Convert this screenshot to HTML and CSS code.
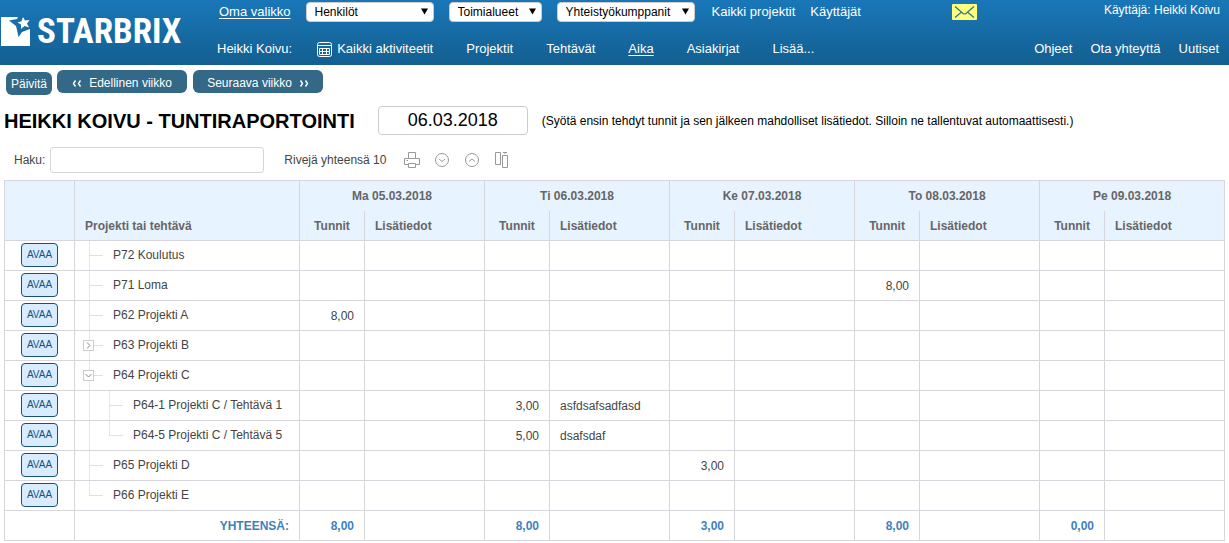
FILE: index.html
```html
<!DOCTYPE html>
<html lang="fi">
<head>
<meta charset="utf-8">
<meta name="viewport" content="width=device-width, initial-scale=1">
<title>Starbrix - Tuntiraportointi</title>
<link rel="stylesheet" href="styles.css">
</head>
<body>
<header class="top">
  <a class="logo" href="#" aria-label="Starbrix">
    <svg class="logo-mark" viewBox="0 0 29 29" aria-hidden="true">
      <path fill="#fff" d="M0 0H17L16 2L8 3.500L15 9L16 13L17.500 20L21 15L29 12V29H0Z"/>
      <path fill="#fff" d="M22 0L24 3.500L28.500 3L26 6.500L28 10.500L23.500 9L20 12L20 7.500L16.500 5.500L20.500 4.200Z"/>
    </svg>
    <span class="logo-text">STARBRIX</span>
  </a>
  <nav class="menus" aria-label="Päävalikko">
    <div class="menu-row menu-row-main">
      <a class="current own" href="#">Oma valikko</a>
      <span class="pick pick-people"><select aria-label="Henkilöt"><option>Henkilöt</option></select><svg viewBox="0 0 7 7" aria-hidden="true"><path d="M0 0.500H7L3.500 6.500Z"/></svg></span>
      <span class="pick pick-area"><select aria-label="Toimialueet"><option>Toimialueet</option></select><svg viewBox="0 0 7 7" aria-hidden="true"><path d="M0 0.500H7L3.500 6.500Z"/></svg></span>
      <span class="pick pick-partner"><select aria-label="Yhteistyökumppanit"><option>Yhteistyökumppanit</option></select><svg viewBox="0 0 7 7" aria-hidden="true"><path d="M0 0.500H7L3.500 6.500Z"/></svg></span>
      <a href="#">Kaikki projektit</a>
      <a href="#">Käyttäjät</a>
      <a class="mail" href="#" aria-label="Viestit"><svg viewBox="0 0 25 16" aria-hidden="true"><rect width="25" height="16" rx="1" fill="#ffff7d"/><path d="M3 2.500L11 9.500Q12.500 10.500 14 9.500L22 2.500M3 13.500L9 8.500M22 13.500L16 8.500" fill="none" stroke="#2d7587" stroke-width="1.200"/></svg></a>
    </div>
    <div class="menu-row menu-row-user">
      <span class="person">Heikki Koivu:</span>
      <a class="activities" href="#"><svg viewBox="0 0 15 15" aria-hidden="true"><path d="M2.500 .5H12.500Q14.500 .5 14.500 2.500V12.500Q14.500 14.500 12.500 14.500H2.500Q.5 14.500 .5 12.500V2.500Q.5 .5 2.500 .5ZM.5 3.500H14.500M2.500 6.500H12.500V12.500H2.500ZM2.500 9.500H12.500M5.500 6V13M9.500 6V13" fill="none" stroke="#fff"/></svg>Kaikki aktiviteetit</a>
      <a href="#">Projektit</a>
      <a href="#">Tehtävät</a>
      <a class="current" href="#">Aika</a>
      <a href="#">Asiakirjat</a>
      <a href="#">Lisää...</a>
    </div>
  </nav>
  <div class="account">
    <span class="account-name">Käyttäjä: Heikki Koivu</span>
    <nav class="account-links" aria-label="Tuki">
      <a href="#">Ohjeet</a>
      <a href="#">Ota yhteyttä</a>
      <a href="#">Uutiset</a>
    </nav>
  </div>
</header>

<main class="page">
  <div class="week-bar">
    <button class="refresh" type="button">Päivitä</button>
    <button class="week" type="button"><svg viewBox="0 0 10 7" aria-hidden="true"><path d="M3.500 .5L1.500 3.500L3.500 6.500M8.500 .5L6.500 3.500L8.500 6.500"/></svg>Edellinen viikko</button>
    <button class="week" type="button">Seuraava viikko<svg viewBox="0 0 10 7" aria-hidden="true"><path d="M1.500 .5L3.500 3.500L1.500 6.500M6.500 .5L8.500 3.500L6.500 6.500"/></svg></button>
  </div>

  <div class="title-bar">
    <h1>HEIKKI KOIVU - TUNTIRAPORTOINTI</h1>
    <input class="date" type="text" value="06.03.2018" aria-label="Päivämäärä">
    <p class="hint">(Syötä ensin tehdyt tunnit ja sen jälkeen mahdolliset lisätiedot. Silloin ne tallentuvat automaattisesti.)</p>
  </div>

  <div class="tools">
    <label for="search">Haku:</label>
    <input class="search" id="search" type="text">
    <span class="count">Rivejä yhteensä 10</span>
    <div class="tool-icons">
      <button type="button" aria-label="Tulosta"><svg viewBox="0 0 16 16"><path d="M4.500 6.500V.5H11.500V6.500M4.500 12.500H.5V6.500H15.500V12.500H11.500M4.500 11.500H11.500V15.500H4.500ZM2.500 8.500H4"/></svg></button>
      <button type="button" aria-label="Avaa kaikki"><svg viewBox="0 0 16 16"><circle cx="8" cy="8" r="6.500"/><path d="M5 7L8 9.500L11 7"/></svg></button>
      <button type="button" aria-label="Sulje kaikki"><svg viewBox="0 0 16 16"><circle cx="8" cy="8" r="6.500"/><path d="M5 9.500L8 7L11 9.500"/></svg></button>
      <button type="button" aria-label="Sarakkeet"><svg viewBox="0 0 16 16"><path d="M1.500 .5H6.500V12.500H1.500ZM8.500 3.500H13.500V15.500H8.500ZM9 .5H13M11 .5V2"/></svg></button>
    </div>
  </div>

  <table class="hours">
    <colgroup>
      <col class="c-open"><col class="c-name">
      <col class="c-num"><col class="c-note">
      <col class="c-num"><col class="c-note">
      <col class="c-num"><col class="c-note">
      <col class="c-num"><col class="c-note">
      <col class="c-num"><col class="c-note">
    </colgroup>
    <thead>
      <tr>
        <th rowspan="2"></th>
        <th class="name-head" rowspan="2" scope="col">Projekti tai tehtävä</th>
        <th class="day" colspan="2" scope="colgroup">Ma 05.03.2018</th>
        <th class="day" colspan="2" scope="colgroup">Ti 06.03.2018</th>
        <th class="day" colspan="2" scope="colgroup">Ke 07.03.2018</th>
        <th class="day" colspan="2" scope="colgroup">To 08.03.2018</th>
        <th class="day" colspan="2" scope="colgroup">Pe 09.03.2018</th>
      </tr>
      <tr>
        <th class="sub" scope="col">Tunnit</th><th class="sub note" scope="col">Lisätiedot</th>
        <th class="sub" scope="col">Tunnit</th><th class="sub note" scope="col">Lisätiedot</th>
        <th class="sub" scope="col">Tunnit</th><th class="sub note" scope="col">Lisätiedot</th>
        <th class="sub" scope="col">Tunnit</th><th class="sub note" scope="col">Lisätiedot</th>
        <th class="sub" scope="col">Tunnit</th><th class="sub note" scope="col">Lisätiedot</th>
      </tr>
    </thead>
    <tbody>
      <tr><td class="open"><button type="button">AVAA</button></td><td><div class="tree"><i class="branch"></i>P72 Koulutus</div></td><td class="num"></td><td></td><td class="num"></td><td></td><td class="num"></td><td></td><td class="num"></td><td></td><td class="num"></td><td></td></tr>
      <tr><td class="open"><button type="button">AVAA</button></td><td><div class="tree"><i class="branch"></i>P71 Loma</div></td><td class="num"></td><td></td><td class="num"></td><td></td><td class="num"></td><td></td><td class="num">8,00</td><td></td><td class="num"></td><td></td></tr>
      <tr><td class="open"><button type="button">AVAA</button></td><td><div class="tree"><i class="branch"></i>P62 Projekti A</div></td><td class="num">8,00</td><td></td><td class="num"></td><td></td><td class="num"></td><td></td><td class="num"></td><td></td><td class="num"></td><td></td></tr>
      <tr><td class="open"><button type="button">AVAA</button></td><td><div class="tree"><i class="branch"></i><button class="toggle" type="button" aria-label="Avaa P63" aria-expanded="false"><svg viewBox="0 0 9 9"><path d="M3 1.500L6 4.500L3 7.500"/></svg></button>P63 Projekti B</div></td><td class="num"></td><td></td><td class="num"></td><td></td><td class="num"></td><td></td><td class="num"></td><td></td><td class="num"></td><td></td></tr>
      <tr><td class="open"><button type="button">AVAA</button></td><td><div class="tree"><i class="branch"></i><button class="toggle" type="button" aria-label="Sulje P64" aria-expanded="true"><svg viewBox="0 0 9 9"><path d="M1.500 3L4.500 6L7.500 3"/></svg></button>P64 Projekti C</div></td><td class="num"></td><td></td><td class="num"></td><td></td><td class="num"></td><td></td><td class="num"></td><td></td><td class="num"></td><td></td></tr>
      <tr><td class="open"><button type="button">AVAA</button></td><td><div class="tree"><i class="rail"></i><i class="branch"></i>P64-1 Projekti C / Tehtävä 1</div></td><td class="num"></td><td></td><td class="num">3,00</td><td class="note">asfdsafsadfasd</td><td class="num"></td><td></td><td class="num"></td><td></td><td class="num"></td><td></td></tr>
      <tr><td class="open"><button type="button">AVAA</button></td><td><div class="tree"><i class="rail"></i><i class="branch last"></i>P64-5 Projekti C / Tehtävä 5</div></td><td class="num"></td><td></td><td class="num">5,00</td><td class="note">dsafsdaf</td><td class="num"></td><td></td><td class="num"></td><td></td><td class="num"></td><td></td></tr>
      <tr><td class="open"><button type="button">AVAA</button></td><td><div class="tree"><i class="branch"></i>P65 Projekti D</div></td><td class="num"></td><td></td><td class="num"></td><td></td><td class="num">3,00</td><td></td><td class="num"></td><td></td><td class="num"></td><td></td></tr>
      <tr><td class="open"><button type="button">AVAA</button></td><td><div class="tree"><i class="branch last"></i>P66 Projekti E</div></td><td class="num"></td><td></td><td class="num"></td><td></td><td class="num"></td><td></td><td class="num"></td><td></td><td class="num"></td><td></td></tr>
    </tbody>
    <tfoot>
      <tr><td></td><th class="total" scope="row">YHTEENSÄ:</th><td class="num">8,00</td><td></td><td class="num">8,00</td><td></td><td class="num">3,00</td><td></td><td class="num">8,00</td><td></td><td class="num">0,00</td><td></td></tr>
    </tfoot>
  </table>
</main>
</body>
</html>
```
FILE: styles.css
```css
* { box-sizing: border-box; }

body {
  margin: 0;
  background: #fff;
  color: #000;
  font: 12px/16px "Liberation Sans", Arial, sans-serif;
}

button, input, select { font: inherit; color: inherit; margin: 0; }
button { cursor: pointer; }
svg { display: block; }

/* Header */
.top {
  display: flex;
  min-height: 65px;
  padding-right: 9px;
  background: linear-gradient(#1977b8, #135f90);
  color: #fff;
  font-size: 13px;
  white-space: nowrap;
}
.top a { color: #fff; text-decoration: none; }
.top a.current { text-decoration: underline; text-underline-offset: 2px; }

.logo {
  display: flex;
  flex: 0 0 217px;
  align-items: flex-start;
  gap: 7px;
  padding: 17px 0 0 1px;
}
.logo-mark { width: 29px; height: 29px; }
.logo-text {
  font: bold 35px/30px "Liberation Sans Narrow", "Roboto Condensed", sans-serif;
}

.menus { flex: 1; }
.menu-row { display: flex; align-items: center; }
.menu-row-main { gap: 15px; height: 24px; }
.menu-row-main .own { padding-left: 2px; }
.menu-row-user { gap: 33px; height: 41px; padding-top: 9px; }
.menu-row-user .person { margin-right: -8px; }
.activities { display: flex; align-items: center; gap: 5px; }
.activities svg { width: 15px; height: 15px; }
.mail { margin-left: 76px; }
.mail svg { width: 25px; height: 16px; }

.pick { position: relative; color: #000; font-size: 12px; }
.pick select {
  display: block;
  width: 100%;
  height: 20px;
  padding: 0 8px;
  border: 1px solid #ccc;
  border-radius: 4px;
  background: #fff;
  appearance: none;
}
.pick svg {
  position: absolute;
  top: 6px;
  right: 6px;
  width: 7px;
  height: 7px;
  pointer-events: none;
}
.pick-people { width: 128px; }
.pick-area { width: 93px; }
.pick-partner { width: 138px; margin-right: 2px; }

.account { display: flex; flex-direction: column; align-items: flex-end; gap: 23px; padding-top: 2px; }
.account-name { font-size: 12px; }
.account-links { display: flex; gap: 18px; padding-right: 1px; }

/* Week navigation */
.page { padding: 5px 4px 0; }
.week-bar { display: flex; align-items: flex-start; padding-left: 2px; }
.week-bar button {
  height: 23px;
  border: 0;
  border-radius: 6px;
  background: #336886;
  color: #fff;
}
.week-bar .refresh { margin: 2px 5px 0 0; padding: 0 5px; }
.week-bar .week {
  display: flex;
  align-items: center;
  justify-content: center;
  gap: 7px;
  width: 130px;
  margin-right: 6px;
  padding: 3px 0 0;
}
.week-bar svg { width: 10px; height: 7px; fill: none; stroke: #fff; stroke-width: 1.4; }

/* Title */
.title-bar { display: flex; align-items: center; margin-top: 10px; }
h1 { margin: 0 23px 0 0; padding-top: 2px; font-size: 20px; line-height: 28px; }
.date {
  width: 150px;
  height: 29px;
  margin-right: 14px;
  padding: 0;
  border: 1px solid #ccc;
  border-radius: 4px;
  font-size: 18px;
  text-align: center;
}
.hint { margin: 0; padding-top: 2px; }

/* Table tools */
.tools { display: flex; align-items: center; padding: 12px 0 7px 10px; color: #444; }
.search {
  width: 214px;
  height: 26px;
  margin: 0 20px 0 5px;
  border: 1px solid #d5d5dc;
  border-radius: 3px;
}
.tool-icons { display: flex; gap: 14px; margin-left: 18px; }
.tool-icons button { padding: 0; border: 0; background: none; }
.tool-icons svg { width: 16px; height: 16px; fill: none; stroke: #999; }

/* Hours table */
.hours {
  width: 100%;
  border-collapse: collapse;
  table-layout: fixed;
  color: #444;
}
.c-open { width: 70px; }
.c-name { width: 225px; }
.c-num { width: 65px; }
.c-note { width: 120px; }
.hours tr { height: 30px; }
.hours th, .hours td { padding: 0; border: 1px solid #d6d6dc; }
.hours th { color: #666; }
.hours thead th { background: #e7f3ff; }
.hours .day { border-bottom-style: hidden; }
.hours .note { padding-top: 1px; padding-left: 10px; text-align: left; }
.hours .sub { padding-top: 2px; border-top-style: hidden; }
.hours .name-head { padding: 0 10px 6px; text-align: left; vertical-align: bottom; }
.hours .num { padding: 1px 10px 0 0; text-align: right; }
.hours tfoot .num, .hours .total { color: #3f7fbf; font-weight: bold; }
.hours .total { padding-right: 10px; text-align: right; }

.hours .open { padding-bottom: 2px; }
.open button {
  display: block;
  width: 37px;
  height: 24px;
  margin: 0 auto;
  padding: 0;
  border: 1px solid #14527c;
  border-radius: 4px;
  background: #d9ecff;
  color: #14527c;
  font-size: 10px;
}

.tree {
  position: relative;
  display: flex;
  height: 29px;
  padding-left: 14px;
  line-height: 28px;
}
.rail {
  width: 20px;
  border-left: 1px solid #e6e6e6;
}
.branch {
  width: 14px;
  margin-right: 10px;
  background:
    linear-gradient(#e0e0e0, #e0e0e0) 0 14px / 14px 1px no-repeat,
    linear-gradient(#e6e6e6, #e6e6e6) 0 0 / 1px 100% no-repeat;
}
.branch.last { background-size: 14px 1px, 1px 14px; }
.toggle {
  position: absolute;
  top: 9px;
  left: 8px;
  width: 11px;
  height: 11px;
  padding: 0;
  border: 1px solid #ccc;
  background: #fff;
}
.toggle svg { width: 9px; height: 9px; fill: none; stroke: #888; }
```
